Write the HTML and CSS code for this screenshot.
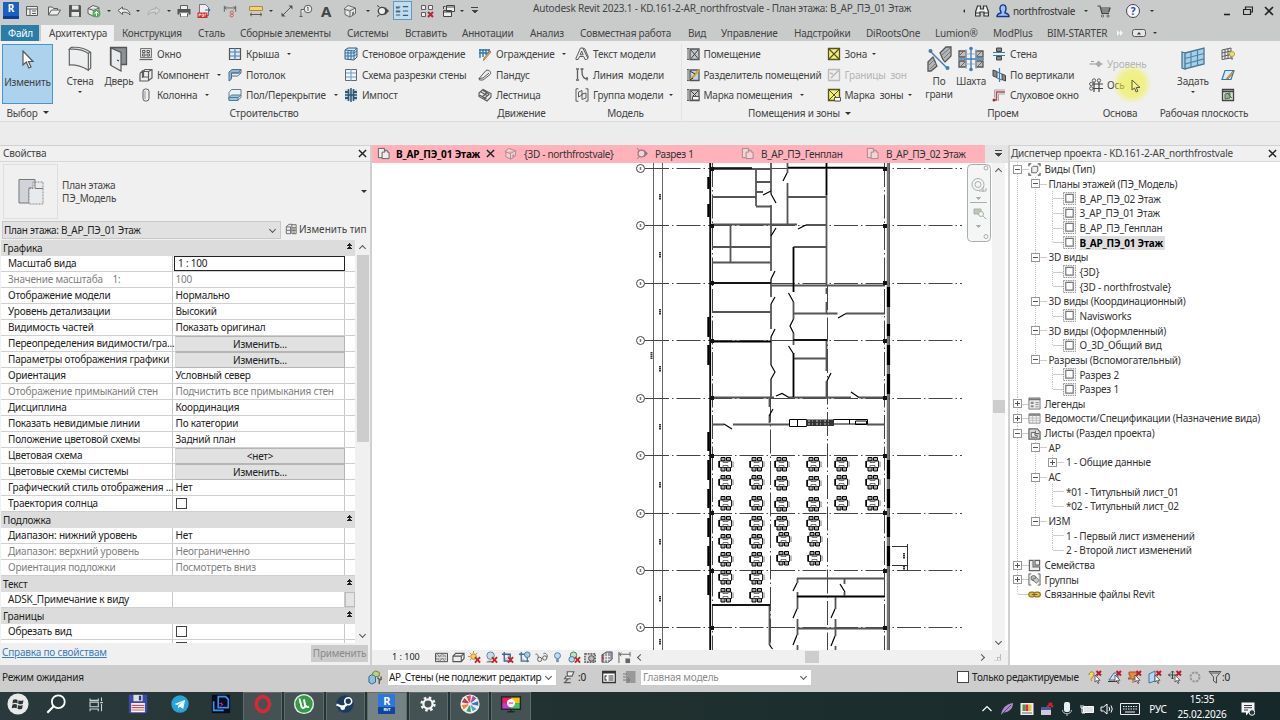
FILE: index.html
```html
<!DOCTYPE html>
<html lang="ru">
<head>
    <meta charset="UTF-8">
    <meta name="viewport" content="width=device-width, initial-scale=1.0">
    <title>Autodesk Revit 2023.1</title>
    <link rel="stylesheet" href="styles.css">
</head>
<body>
    <!-- Icon set -->
    <svg class="defs" width="0" height="0">
        <symbol id="i-window" viewBox="0 0 14 14"><path d="M1.500 2.500h11v9h-11zM1.500 5h11M5 5v6.500M7 7h4M7 9.500h4" class="s"/></symbol>
        <symbol id="i-open" viewBox="0 0 14 14"><path d="M1.500 11V3h4l1 1.500h4V6M1.500 11l3-5h9l-3 5z" class="s"/></symbol>
        <symbol id="i-save" viewBox="0 0 14 14"><path d="M1 1h11l1 1v11H1z" fill="#555"/><path d="M4 1.500h6.500v4H4zM3.500 8h7.500v4.500H3.500z" fill="#e6e8e8"/></symbol>
        <symbol id="i-sync" viewBox="0 0 14 14"><path d="M1 4.500L6 1.500l6 2v5l-5 4-6-3zM1 4.500l5.500 2L12 4M6.500 6.500V12" class="s"/><circle cx="9.500" cy="9.500" r="4" fill="#5fa765"/><path d="M7.500 10l2-2.500 2 2M9.500 8v4" stroke="#fff" fill="none"/></symbol>
        <symbol id="i-undo" viewBox="0 0 14 14"><path d="M1 6.500L5.500 3v2c4.500 0 7 1.500 7.500 6-2-2.500-4-3-7.500-2.700V10.500z" class="s"/></symbol>
        <symbol id="i-print" viewBox="0 0 14 14"><path d="M3.500 5V1.500h7V5M3.500 9.500v3h7v-3" class="s"/><path d="M.5 5h13v5.500h-2V8.500h-9v2h-2z" fill="#555"/><path d="M4 9.500h6v3H4z" fill="#fff"/></symbol>
        <symbol id="i-pdf" viewBox="0 0 14 14"><path d="M2.500.5h6l3 3v8h-9z" fill="#eee" stroke="#777"/><path d="M.5 8.500h10V14H.5z" fill="#d2292d"/><path d="M2 12.500v-2.500h1.500v1H2M5 10v2.500h1.500V10zM8 12.500V10h1.500" stroke="#fff" stroke-width=".7" fill="none"/><path d="M8 6h5M11 4l2.200 2L11 8" stroke="#2d6fae" fill="none"/></symbol>
        <symbol id="i-dim" viewBox="0 0 16 14"><path d="M1.500 1v7M14.500 1v7M1.500 3.500h13M4 1.500l-2 2 2 2M12 1.500l2 2-2 2" class="s"/><path d="M8 8.500c0-2 4-2 4 0s-4 2-4 4 4 1.500 4-.5-4-1.500-4-3.500" fill="none" stroke="#d05040"/></symbol>
        <symbol id="i-measure" viewBox="0 0 14 14"><path d="M.5 2.500h13v4H.5z" fill="#f3d27a" stroke="#b08a2c"/><path d="M1 10.500h12M3 8.700l-2 1.800 2 1.800M11 8.700l2 1.800-2 1.800" class="s"/></symbol>
        <symbol id="i-align" viewBox="0 0 14 14"><path d="M3 11L11 3" stroke="#555"/><path d="M1.500 12.500v-4l4 4zM12.500 1.500v4l-4-4z" fill="#555"/></symbol>
        <symbol id="i-tag" viewBox="0 0 14 14"><circle cx="9" cy="5" r="3.800" class="s"/><path d="M9 3v4M5.200 5.500H2V12M.5 12.500h3M8 3.700L9 3" class="s"/></symbol>
        <symbol id="i-house" viewBox="0 0 14 14"><path d="M1 5l4-3.500L12.500 4v5.500L7 13l-5-2.500V5M1 5l5.500 2L12.500 4M7 7v6" fill="#e8e8e8" stroke="#666"/><path d="M9 8.500l2-1.200v3L9 11.500z" fill="#777"/></symbol>
        <symbol id="i-section" viewBox="0 0 14 14"><path d="M4.500 3L2 1.500M4.500 11L2 12.500M10 3.500L13.500 7 10 10.500z" fill="#444" stroke="#444"/><circle cx="7" cy="7" r="3.700" fill="#eee" stroke="#444" stroke-width="1.300"/></symbol>
        <symbol id="i-thin" viewBox="0 0 16 14"><path d="M1 2.500h5M1 7h5M1 11.500h5M9 2h6M9 7h6M9 12h6" stroke="#2d5f8c" fill="none" stroke-width="1.200"/><path d="M1 3.500h4M1 8h5" stroke="#333"/></symbol>
        <symbol id="i-closeviews" viewBox="0 0 14 14"><path d="M1.500 1.500h4v4h-4zM8.500 1.500h4v4h-4zM1.500 8.500h4v4h-4z" class="s"/><path d="M8 8l5 5M13 8l-5 5" stroke="#c22036" stroke-width="2"/></symbol>
        <symbol id="i-switch" viewBox="0 0 14 14"><path d="M4.500 1.500h8v6h-8zM4.500 3h8M1.500 6.500h8v6h-8zM1.500 8h8M1.500 5V2.500h2" fill="#eee" stroke="#444"/></symbol>
        <symbol id="i-binoc" viewBox="0 0 14 14"><path d="M2.500 2h3v3h3V2h3l2 6v4h-4.500V8h-4v4H.5V8z" fill="#eee" stroke="#333" stroke-width="1.200"/><path d="M1 9h4M9 9h4" stroke="#333"/></symbol>
        <symbol id="i-user" viewBox="0 0 14 14"><path d="M4 4.500C4-.3 10-.3 10 4.500 10 8 8.500 7.500 9 9c3 .5 4 1.500 4 3.500H1C1 10.500 2 9.500 5 9c.5-1.500-1-1.500-1-4.500z" fill="#a3c0f1" stroke="#17358c" stroke-width="1.400"/></symbol>
        <symbol id="i-cart" viewBox="0 0 14 14"><path d="M.5 2h2.500l2 7.500h7M3.500 4H13l-1.200 4H4.700M4 6h8.500" fill="none" stroke="#444" stroke-width="1.200"/><circle cx="5.500" cy="12" r="1.100" class="s"/><circle cx="11" cy="12" r="1.100" class="s"/></symbol>
        <symbol id="i-cross" viewBox="0 0 10 10"><path d="M1 1l8 8M9 1L1 9" stroke="#222" stroke-width="1.600"/></symbol>

        <symbol id="i-wall" viewBox="0 0 26 28"><path d="M1.500 3.500C8 3 16 4 22 8l2-1.500C18 2 9 1 3.500 1.500zM1.500 3.500v17C9 20 15 22 22 26V8M22 26l2.500-2V6.500" fill="#eceef0" stroke="#666" stroke-width="1.300"/></symbol>
        <symbol id="i-door" viewBox="0 0 20 26"><path d="M1.500 1.500h16v17h-16z" fill="#8d9193" stroke="#555" stroke-width="1.300"/><path d="M2 2l10 4.500V25L2 19.500z" fill="#e9ecee" stroke="#555" stroke-width="1.200"/><path d="M8 14l2 1" stroke="#444" stroke-width="1.300"/></symbol>
        <symbol id="i-win" viewBox="0 0 14 14"><path d="M1.500 1.500h11v9h-11z" fill="#ddd" stroke="#777"/><path d="M3.500 3.500h2.500v2H3.500zM8 3.500h2.500v2H8zM3.500 7h2.500v2H3.500zM8 7h2.500v2H8z" class="s"/><path d="M.5 12.500h13" stroke="#666" stroke-width="1.300"/></symbol>
        <symbol id="i-comp" viewBox="0 0 14 14"><path d="M1 5.500L3.500 3v7M1 5.500V13h8l4-3V1.500H6L4.500 3v6h5V3.500L13 1.500M9.500 9v4M4.500 3.500h5" class="s" stroke-width="1.200"/></symbol>
        <symbol id="i-col" viewBox="0 0 14 14"><rect x="4" y="1" width="6" height="12" rx="2.500" class="s"/><path d="M6 3v8" stroke="#999"/></symbol>
        <symbol id="i-roof" viewBox="0 0 14 14"><path d="M1.500 1.500h11v11h-11z" fill="#dbe9f4" stroke="#555" stroke-width="1.200"/><path d="M7 1v12M2 5h10M2 9h10" stroke="#4d82ad" stroke-width="1.200"/></symbol>
        <symbol id="i-ceil" viewBox="0 0 14 14"><path d="M1 4l3-2.500h9L10.500 5H3.500v6L1 13z" fill="#8fb7d8" stroke="#4d6f8b"/><path d="M3.500 5H13V1.500M3.500 8h6L13 5" fill="none" stroke="#4d6f8b"/></symbol>
        <symbol id="i-floor" viewBox="0 0 14 14"><path d="M3.500 1.500H13v8L10 12H1V4.500z" fill="#eef1f2" stroke="#667c8c"/><path d="M1 9.500l2.500-2.500H13l-3 2.500V12.500H1zM1 9.500h9" fill="#9cc6e2" stroke="#4d7c9e"/></symbol>
        <symbol id="i-curtain" viewBox="0 0 14 14"><path d="M1 3l3-2h9v9l-3 3-9-1z" fill="#d5e7f4" stroke="#345a78"/><path d="M1 6h9l3-2M1 9h9l3-2M4 3v9.500M7 3v9.500M10 4v9M1 3l9 1 3-3" fill="none" stroke="#376f9b"/></symbol>
        <symbol id="i-grid" viewBox="0 0 14 14"><path d="M1.500 1.500h11v11h-11z" fill="#f0f5f9" stroke="#667"/><path d="M7 1v12M2 5h10M2 9h10" stroke="#6f9dbf"/></symbol>
        <symbol id="i-mull" viewBox="0 0 14 14"><path d="M1 1.500h12v11H1z" fill="#bfd5e5"/><path d="M1 3h3v2H1zM1 9h3v2H1zM10 3h3v2h-3zM10 9h3v2h-3z" fill="#2c5b80"/><path d="M7 0v14M1 7h12M4.500 1v12M9.500 1v12" stroke="#34546c" stroke-width="1.500"/></symbol>
        <symbol id="i-rail" viewBox="0 0 14 14"><path d="M1 3h11M1 6h10M2 2v9M5 2v8M8 2v6M11 2v4" stroke="#2e79b2" fill="none" stroke-width="1.400"/><path d="M13 5l-6 7-1.500 1.500.5-2.500L12 4z" fill="#edb85c" stroke="#8a6428" stroke-width=".7"/></symbol>
        <symbol id="i-ramp" viewBox="0 0 14 14"><path d="M1 10.500L8 2.500c4-1.500 6 3 3.500 4.500L5 12H1.500zM1 10.500l4-.5 6-5" class="s"/></symbol>
        <symbol id="i-stair" viewBox="0 0 14 14"><path d="M1 5l4-3.500 8 4V9l-4 4-8-4.500zM3 4l7 4M5 2.500l6.500 4M1.500 7l7 4M4 9l5-4.500M6 10.500l5-4" class="s" stroke-width="1.100"/></symbol>
        <symbol id="i-mtext" viewBox="0 0 14 14"><path d="M.7 12L5.500 1h2.300L13 11.500l-1.500 1H10L8.700 9.500H4.500L3.200 12.500H1zM6.700 4L5.200 7.800h2.900zM7.800 1L10 2l3.500 8.500" class="s"/></symbol>
        <symbol id="i-mline" viewBox="0 0 14 14"><path d="M2.500 2v9M1 1h3M1 12h3M7 1v3c0 4 2 7 6 7M5.500 1h3M12 9v3.500" fill="none" stroke="#5c5c5c" stroke-width="1.300"/></symbol>
        <symbol id="i-mgroup" viewBox="0 0 14 14"><path d="M3.500.8H1v12.400h2.500M10.500.8H13v12.400h-2.500" class="s"/><path d="M3.500 4L7 2.500V7L3.500 9zM7 6l4-1v5l-4 1.500z" class="s"/></symbol>
        <symbol id="i-room" viewBox="0 0 14 14"><path d="M1 1.500h2M1 12.500h2M2 1v12" class="s"/><path d="M4 2h9v10.500H4z" fill="#bfc8ce" stroke="#555" stroke-width="1.300"/><path d="M5 3l7 8.500M12 3l-7 8.500" stroke="#444"/></symbol>
        <symbol id="i-roomsep" viewBox="0 0 14 14"><path d="M1 1.500h2M1 12.500h2M2 1v12" class="s"/><path d="M4 2h9v10.500H4z" fill="#bcd3e6" stroke="#555" stroke-width="1.300"/><path d="M13 2L6.500 9.500 5 11.500" stroke="#d5a13b" stroke-width="2"/><path d="M4 3l5 3M4 12l3-2" stroke="#333"/></symbol>
        <symbol id="i-roomtag" viewBox="0 0 14 14"><path d="M1 1.500h2M1 12.500h2M2 1v12" class="s"/><path d="M4 2h9v10.500H4z" fill="#c5c9cb" stroke="#555" stroke-width="1.300"/><path d="M5 3l7 7M12 3L7 8" stroke="#444"/><path d="M6.500 8.500h6.500v3.500H6.500z" fill="#fff" stroke="#555"/></symbol>
        <symbol id="i-area" viewBox="0 0 14 14"><path d="M1.500 1.500h11v11h-11z" fill="#f3ef7b" stroke="#55531c" stroke-width="1.300"/><path d="M2 2l10 10M12 2L2 12" stroke="#55531c" stroke-width="1.200"/></symbol>
        <symbol id="i-areasep" viewBox="0 0 14 14"><path d="M1.500 1.500h11v11h-11z" fill="#eee" stroke="#bbb" stroke-width="1.300"/><path d="M12 2L4 10M3 5l3 1" stroke="#bbb" stroke-width="1.500"/></symbol>
        <symbol id="i-areatag" viewBox="0 0 14 14"><path d="M1.500 1.500h11v11h-11z" fill="#f3ef7b" stroke="#55531c" stroke-width="1.300"/><path d="M2 2l8 8M12 2L2 12" stroke="#55531c"/><path d="M7.500 9.500h6V13h-6z" fill="#fff" stroke="#555"/></symbol>
        <symbol id="i-face" viewBox="0 0 26 26"><path d="M14 7l6-6h5v9l-6 6c-3-2-3-6-5-9zM2 16l5-5c2 3 2 6 4 9l-6 5H2z" fill="#b3b5b6" stroke="#555" stroke-width="1.300"/><path d="M16 9l8-7M18 12l7-7M3 19l6-6M4 23l6-6" stroke="#777"/><path d="M4 5l17 17" stroke="#3d7db5" stroke-width="1.400"/><circle cx="4.500" cy="5" r="2" fill="#3d7db5"/><circle cx="21.500" cy="22" r="2" fill="#3d7db5"/></symbol>
        <symbol id="i-shaft" viewBox="0 0 26 26"><path d="M1 5h7v6H1zM1 15h7v6H1zM18 5h7v6h-7zM18 15h7v6h-7z" fill="#bdbfc0" stroke="#555" stroke-width="1.300"/><path d="M2 9l3-3M3 20l4-4M19 10l4-4M20 20l4-4" stroke="#666"/><path d="M8 3v20M18 3v20M8 8h10M8 18h10" stroke="#96b6cf"/><path d="M13 2v22M0 13h26" stroke="#3d7db5" stroke-width="1.300"/><circle cx="13" cy="2.500" r="1.800" fill="#3d7db5"/><circle cx="13" cy="23.500" r="1.800" fill="#3d7db5"/></symbol>
        <symbol id="i-owall" viewBox="0 0 14 14"><path d="M4.500 1h5v3.500h-5zM4.500 9.500h5V13h-5z" fill="#888" stroke="#444"/><path d="M1 5.500h12M1 8.500h12" stroke="#3d7db5" stroke-width="1.200"/></symbol>
        <symbol id="i-overt" viewBox="0 0 14 14"><path d="M1 2l4 1.500v6L1 8z" fill="#888" stroke="#444"/><path d="M10 6l3.500 1.500V13L10 11.500z" fill="#888" stroke="#444"/><path d="M7.500 0v14M5 4l5 2M5 10l5 2" stroke="#3d7db5" stroke-width="1.200"/></symbol>
        <symbol id="i-dormer" viewBox="0 0 14 14"><path d="M1.500 12h3V4H13" fill="none" stroke="#b04a56" stroke-width="1.500"/><path d="M6.500 13V6H13M2.500 9.500V2H13" fill="none" stroke="#777" stroke-width=".6"/><circle cx="2" cy="12" r="1.500" fill="#a03040"/></symbol>
        <symbol id="i-level" viewBox="0 0 14 14"><path d="M.5 7H8M11 7h2.500M2 4.500h3" stroke="#999"/><path d="M9.500 3.500L13 7l-3.500 3.500L6.500 7z" fill="#aaa"/></symbol>
        <symbol id="i-axis" viewBox="0 0 14 14"><path d="M5 4v10M10 4v10M4 6h10M4 10.500h10" stroke="#444" stroke-width="1.200"/><circle cx="5" cy="2.500" r="1.700" class="s"/><circle cx="10" cy="2.500" r="1.700" class="s"/><circle cx="2.300" cy="6" r="1.700" class="s"/><circle cx="2.300" cy="10.500" r="1.700" class="s"/></symbol>
        <symbol id="i-plane" viewBox="0 0 24 26"><path d="M1 6l3 1v16l-3-1zM4 7l19-5v16L4 23z" fill="#a5d0e6" stroke="#4a7693" stroke-width="1.300"/><path d="M10 5.500v16M16.500 4v16M4 12.500L23 7.500M4 18l19-5.200" stroke="#4a86ab" stroke-width="1.200"/></symbol>
        <symbol id="i-showp" viewBox="0 0 14 14"><path d="M1 3l9-2v10l-9 1.500zM1 6l9-2M1 9.500l9-2M4 2.500V12M7 1.500V12" class="s"/><circle cx="11" cy="7" r="2.600" fill="#f1dc72" stroke="#a08b34" stroke-width=".7"/><path d="M10 10.500h2v2h-2z" fill="#777"/></symbol>
        <symbol id="i-refp" viewBox="0 0 14 14"><path d="M4 2.500h9l-3 9H1z" fill="#d7eaf5" stroke="#3479aa" stroke-width="1.200"/><path d="M13 4l-6 7-1.500.5.5-1.500 6-7z" fill="#e9b65b" stroke="#7c5c2b" stroke-width=".7"/></symbol>
        <symbol id="i-viewer" viewBox="0 0 14 14"><path d="M1.500 1.500h11v11h-11zM1.500 3.500h11" fill="#ddd" stroke="#444" stroke-width="1.300"/><path d="M4 6l5-1v5l-5 1zM7 6l4 4" fill="#8fb98d" stroke="#4c6c4b"/></symbol>

        <symbol id="i-plan" viewBox="0 0 14 14"><path d="M5.500 11.500h-4v-10H8v3" class="s"/><path d="M5.500 5.500h3v-2h2.500v2h2v7h-7.500z" class="s"/></symbol>
        <symbol id="i-typeplan" viewBox="0 0 28 28"><path d="M2 1.500h16V10h-6v15H2z" fill="#d0d4d8" stroke="#777"/><path d="M12 10.500h4V4h10v22H12z" fill="#e8ebee" stroke="#888" stroke-dasharray="2 1"/><path d="M18 4v6.500h8" fill="none" stroke="#777"/></symbol>
        <symbol id="i-edittype" viewBox="0 0 14 14"><path d="M1.500 4.500l3-3H8v4M1.500 4.500v8h5v-8zM1.500 8.500h5M8 5.500h5v7H8zM8 8.500h5M10.500 5.500v7M8 2h5v3.500" class="s"/></symbol>
        <symbol id="i-view" viewBox="0 0 14 14"><path d="M.5.5h13v13H.5z" fill="#f5f5f5" stroke="#888" stroke-dasharray="1.500 1"/><path d="M3 2.500h8v8.500H3z" fill="#fff" stroke="#777" stroke-width="1.300"/></symbol>
        <symbol id="i-views" viewBox="0 0 14 14"><path d="M3.500 1H1v2.500M10.500 1H13v2.500M1 10.500V13h2.500M10.500 13H13v-2.500" class="s" stroke-width="1.300"/><path d="M4 5l1.500-1.500h5v5L9 10.500H4z" class="s"/></symbol>
        <symbol id="i-legend" viewBox="0 0 14 14"><path d="M1 1h12v12H1z" fill="#eee" stroke="#777"/><path d="M1 2.500h12" stroke="#777" stroke-width="2"/><path d="M3 5h3v2.500H3zM3 9h3v2H3z" fill="#888"/><path d="M8 6h3.500M8 8h3.500M8 10.500h3.500" stroke="#888"/></symbol>
        <symbol id="i-sched" viewBox="0 0 14 14"><path d="M1 2h12v10H1z" fill="#f4f4f4" stroke="#888"/><path d="M1 3h12" stroke="#888" stroke-width="2.500"/><path d="M1 6.500h12M1 9h12M5 4v8M9 4v8" stroke="#bbb"/></symbol>
        <symbol id="i-sheets" viewBox="0 0 14 14"><path d="M1 2h9l3 3v8H1z" fill="#d5d7dc" stroke="#666" stroke-width="1.300"/><path d="M3.500 11V6h4v3H10v2zM8 4v3h4" class="s"/></symbol>
        <symbol id="i-family" viewBox="0 0 14 14"><path d="M1.500 1.500h4v7h7v4h-11z" fill="#eee" stroke="#666" stroke-width="1.300"/><path d="M7.500 1.500h5v5h-5z" class="s" stroke-width="1.300"/></symbol>
        <symbol id="i-groups" viewBox="0 0 14 14"><path d="M3.500 1H1v12h2.500M10.500 1H13v12h-2.500" class="s"/><circle cx="6" cy="5.500" r="2.800" fill="#bbb" stroke="#666"/><path d="M5 7l4-2 3 3-3 3z" fill="#ccc" stroke="#666"/></symbol>
        <symbol id="i-link" viewBox="0 0 14 14"><rect x=".7" y="4.500" width="7" height="5" rx="2.500" fill="#e3bd45" stroke="#957216" stroke-width="1.200"/><rect x="6.300" y="4.500" width="7" height="5" rx="2.500" fill="#e3bd45" stroke="#957216" stroke-width="1.200"/><path d="M4 7h6" stroke="#755b18"/></symbol>

        <symbol id="i-detail" viewBox="0 0 14 14"><path d="M.5 2.500h13v9H.5z" fill="#ddd" stroke="#444"/><path d="M1 5.500h12M1 8.500h12" stroke="#555" stroke-dasharray="1 1"/><path d="M2 3l3 3 3-3 3 3M2 8l3 3 3-3 3 3" stroke="#666" fill="none" stroke-width=".7"/></symbol>
        <symbol id="i-box" viewBox="0 0 14 14"><path d="M1 5.500L4 2.500h9V8l-3 3.500H1zM1 5.500h9v6M10 5.500l3-3" fill="#eee" stroke="#555" stroke-width="1.200"/></symbol>
        <symbol id="i-sunx" viewBox="0 0 14 14"><circle cx="6" cy="6" r="3" fill="#f7d15d" stroke="#b7812c"/><path d="M6 0v2M0 6h2M2 2l1.300 1.300M10 2L8.700 3.300M2 10l1.300-1.300" stroke="#b7812c"/><use href="#x-red"/></symbol>
        <symbol id="i-shadowx" viewBox="0 0 14 14"><circle cx="6" cy="5" r="4" fill="#c6dce8" stroke="#5c8499"/><path d="M1 12.500c2-3 6-3 9 0" fill="#888"/><use href="#x-red"/></symbol>
        <symbol id="i-cropx" viewBox="0 0 14 14"><path d="M3.500 1v10H12M1 3.500h9V12" fill="#a9cae0" stroke="#3c6787" stroke-width="1.400"/><use href="#x-red"/></symbol>
        <symbol id="i-crop" viewBox="0 0 14 14"><path d="M3.500 1v10H12M1 3.500h9V12" fill="#c8d5dd" stroke="#4c718b" stroke-width="1.400"/><circle cx="10" cy="4" r="3" fill="#a7cbe6" stroke="#447498"/></symbol>
        <symbol id="i-glasses" viewBox="0 0 14 14"><path d="M.5 3.500c2-1 3 1 3 4M9 3c3-2 5 2 4 4" fill="none" stroke="#5c5c5c"/><circle cx="5" cy="9" r="2.300" class="s"/><circle cx="10.500" cy="7.500" r="2.300" class="s"/></symbol>
        <symbol id="i-bulb" viewBox="0 0 14 14"><circle cx="7" cy="5" r="3.200" fill="#c5dcf0" stroke="#4379ab"/><path d="M5.500 8.500h3v3.500h-3z" fill="#7994aa"/></symbol>
        <symbol id="i-worksx" viewBox="0 0 14 14"><circle cx="6" cy="4.500" r="3.500" fill="#bfdcc4" stroke="#427f51"/><circle cx="4" cy="9" r="3" fill="#bcd8ea" stroke="#3a6f91"/><use href="#x-red"/></symbol>
        <symbol id="i-temp" viewBox="0 0 14 14"><path d="M1 3h11v9H1z" fill="#ddd" stroke="#333" stroke-width="1.300" stroke-dasharray="2 1"/><circle cx="8" cy="8" r="3" fill="#bbb" stroke="#444"/></symbol>
        <symbol id="i-analyt" viewBox="0 0 14 14"><path d="M1 12V4l5-3h6v8l-4 3z" fill="#9a9da5" stroke="#505560"/><path d="M1 6h9M1 9h9M4 3v9M7 2v10" stroke="#eee"/><path d="M2 4v6" stroke="#a83440" stroke-width="1.600"/></symbol>
        <symbol id="i-constr" viewBox="0 0 14 14"><path d="M1 1v12M13 1v5M1 3.500h12M3.500 1.500l-2 2 2 2" class="s"/><path d="M8 8h5v5H8z" fill="#666"/></symbol>
        <symbol id="x-red" viewBox="0 0 14 14"><path d="M7.500 6.500l5.500 6M13 6.500l-5.500 6" stroke="#c3262c" stroke-width="2"/></symbol>

        <symbol id="i-ws" viewBox="0 0 16 16"><path d="M1 7l3-2 4 1.500V13l-4 2-3-2z" fill="#8fc0e4" stroke="#2f6388"/><path d="M5 3l3-2 4 1.500v4L8 7 5 5z" fill="#b9d67c" stroke="#64813b"/><path d="M10 8l2 2v5M14 7v3l-2 1" stroke="#555" stroke-width="1.500" fill="none"/></symbol>
        <symbol id="i-req" viewBox="0 0 14 16"><path d="M5 2h7.500l-2 5H5zM4 7l-2 3h7M6 10l-4 4.500M1 14.500h8" class="s" stroke-width="1.300"/></symbol>
        <symbol id="i-opt" viewBox="0 0 14 14"><path d="M.7 1.500h12.600v11H.7z" fill="#fff" stroke="#333" stroke-width="1.300"/><path d="M.7 2.500h12.600" stroke="#333" stroke-width="2"/><path d="M3 5.500v5M3 6h2M3 10h2M6.500 6h5M6.500 8h5M6.500 10h5" stroke="#333"/></symbol>
        <symbol id="i-optx" viewBox="0 0 14 14"><path d="M4 1h9.500v12H4z" fill="#999"/><path d="M1 10h6M5 7l3 3-3 3M1 4h4M1 7h3" stroke="#777" fill="none"/></symbol>
        <symbol id="i-sel1" viewBox="0 0 14 14"><path d="M1 5c0-4 5-4 5-1s-5 5-2 7" fill="#f2d766" stroke="#ab8422"/><use href="#sel"/></symbol>
        <symbol id="i-sel2" viewBox="0 0 14 14"><path d="M1 10l5-7h4v7z" fill="#cfe2f0" stroke="#3e6e91"/><path d="M0 11.500h9" stroke="#333"/><use href="#sel"/></symbol>
        <symbol id="i-sel3" viewBox="0 0 14 14"><path d="M1 2h8v3H8v3h2v1H0V8h2V5H1zM5 9v4" fill="#e98a3b" stroke="#a4551d"/><use href="#sel"/></symbol>
        <symbol id="i-sel4" viewBox="0 0 14 14"><path d="M1 4l6-3v10l-6 2z" fill="#b6d8ee" stroke="#3e779f"/><use href="#sel"/></symbol>
        <symbol id="i-sel5" viewBox="0 0 14 14"><path d="M4.500 1v8M.5 5h8M3 2.500L4.500 1 6 2.500M3 7.500L4.500 9 6 7.500M2 3.500L.5 5 2 6.500" fill="none" stroke="#444"/><use href="#sel"/></symbol>
        <symbol id="sel" viewBox="0 0 14 14"><path d="M8.500 1l4.500 4.500M13 1L8.500 5.500" stroke="#c3162c" stroke-width="2"/><path d="M7 5v7l1.600-1.400L10 13.500l1-.6-1.300-2.600H12z" fill="#fff" stroke="#444" stroke-width=".8"/></symbol>
        <symbol id="i-filter" viewBox="0 0 14 14"><path d="M1 1.500h12L8.500 7v6L5.500 11V7zM2.500 3h9" fill="#ccc" stroke="#555"/></symbol>

        <!-- dining table with four chairs -->
        <symbol id="seat" viewBox="0 0 16 16"><path d="M3 1.500h4v3H3zM8.500 1.500h4v3h-4zM3 11.500h4V15H3zM8.500 11.500h4V15h-4z" fill="#aaa" stroke="#000"/><path d="M1.500 5h12v6.500h-12z" fill="#fff" stroke="#222"/><path d="M1 5v6.500" stroke="#000" stroke-width="1.500"/><path d="M15 5.500v5.500M5 4v2.500h5V4M5 12V9.500h5V12" fill="none" stroke="#555" stroke-width=".8"/></symbol>
    </svg>

    <header class="titlebar">
        <div class="qat">
            <span class="rlogo">R</span>
            <svg><use href="#i-window"/></svg>
            <svg><use href="#i-open"/></svg>
            <svg><use href="#i-save"/></svg>
            <svg><use href="#i-sync"/></svg>
            <i class="dd"></i>
            <svg><use href="#i-undo"/></svg>
            <i class="dd"></i>
            <svg class="dim flip"><use href="#i-undo"/></svg>
            <i class="dd"></i>
            <svg><use href="#i-print"/></svg>
            <svg><use href="#i-pdf"/></svg>
            <svg><use href="#i-dim"/></svg>
            <svg><use href="#i-measure"/></svg>
            <i class="dd"></i>
            <svg><use href="#i-align"/></svg>
            <svg><use href="#i-tag"/></svg>
            <b class="letter-a">A</b>
            <svg><use href="#i-house"/></svg>
            <i class="dd"></i>
            <svg><use href="#i-section"/></svg>
            <span class="qat-on"><svg><use href="#i-thin"/></svg></span>
            <svg><use href="#i-closeviews"/></svg>
            <svg><use href="#i-switch"/></svg>
            <i class="dd"></i>
            <i class="dd bar"></i>
        </div>
        <div class="caption">Autodesk Revit 2023.1 - KD.161-2-AR_northfrostvale - План этажа: В_АР_ПЭ_01 Этаж</div>
        <div class="account">
            <i class="back"></i>
            <svg><use href="#i-binoc"/></svg>
            <svg><use href="#i-user"/></svg>
            <span class="username">northfrostvale</span>
            <i class="dd"></i>
            <svg><use href="#i-cart"/></svg>
            <span class="help">?</span>
            <i class="dd"></i>
        </div>
        <div class="winbtns">
            <svg viewBox="0 0 10 10"><path d="M2 8.500h6" stroke="#222" stroke-width="1.600"/></svg>
            <svg viewBox="0 0 10 10"><path d="M2.500 3V1h7v5H8M.5 3.500h7v5h-7z" fill="none" stroke="#222" stroke-width="1.200"/></svg>
            <svg><use href="#i-cross"/></svg>
        </div>
    </header>

    <nav class="tabs">
        <span class="tab file">Файл</span>
        <span class="tab active">Архитектура</span>
        <span class="tab">Конструкция</span>
        <span class="tab">Сталь</span>
        <span class="tab">Сборные элементы</span>
        <span class="tab">Системы</span>
        <span class="tab">Вставить</span>
        <span class="tab">Аннотации</span>
        <span class="tab">Анализ</span>
        <span class="tab">Совместная работа</span>
        <span class="tab">Вид</span>
        <span class="tab">Управление</span>
        <span class="tab">Надстройки</span>
        <span class="tab">DiRootsOne</span>
        <span class="tab">Lumion®</span>
        <span class="tab">ModPlus</span>
        <span class="tab">BIM-STARTER</span>
        <svg class="more" viewBox="0 0 8 8"><path d="M0 0l4 4-4 4zM4 0l4 4-4 4z" fill="#f4f4f4"/></svg>
        <svg class="minim" viewBox="0 0 14 8"><rect x=".5" y=".5" width="13" height="7" rx="2" fill="#e6e6e6" stroke="#555"/><path d="M5 5.500L7 3l2 2.500z" fill="#333"/></svg>
        <i class="dd"></i>
    </nav>

    <section class="ribbon">
        <div class="panel p-select">
            <div class="body">
                <div class="big pressed">
                    <svg viewBox="0 0 14 20"><path d="M2 1v14l3.300-3 2.500 6 2.200-1-2.500-5.500H12z" fill="#fff" stroke="#555" stroke-width="1.200"/></svg>
                    <span>Изменить</span>
                </div>
            </div>
            <div class="label">Выбор <i class="dd lg"></i></div>
        </div>
        <div class="panel p-build">
            <div class="body">
                <div class="big"><svg><use href="#i-wall"/></svg><span>Стена</span><i class="dd"></i></div>
                <div class="big"><svg><use href="#i-door"/></svg><span>Дверь</span></div>
                <div class="col">
                    <div class="cmd"><svg><use href="#i-win"/></svg><span>Окно</span></div>
                    <div class="cmd"><svg><use href="#i-comp"/></svg><span>Компонент</span><i class="dd"></i></div>
                    <div class="cmd"><svg><use href="#i-col"/></svg><span>Колонна</span><i class="dd"></i></div>
                </div>
                <div class="col">
                    <div class="cmd"><svg><use href="#i-roof"/></svg><span>Крыша</span><i class="dd"></i></div>
                    <div class="cmd"><svg><use href="#i-ceil"/></svg><span>Потолок</span></div>
                    <div class="cmd"><svg><use href="#i-floor"/></svg><span>Пол/Перекрытие</span><i class="dd"></i></div>
                </div>
                <div class="col">
                    <div class="cmd"><svg><use href="#i-curtain"/></svg><span>Стеновое ограждение</span></div>
                    <div class="cmd"><svg><use href="#i-grid"/></svg><span>Схема разрезки стены</span></div>
                    <div class="cmd"><svg><use href="#i-mull"/></svg><span>Импост</span></div>
                </div>
            </div>
            <div class="label">Строительство</div>
        </div>
        <div class="panel p-circ">
            <div class="body">
                <div class="col">
                    <div class="cmd"><svg><use href="#i-rail"/></svg><span>Ограждение</span><i class="dd"></i></div>
                    <div class="cmd"><svg><use href="#i-ramp"/></svg><span>Пандус</span></div>
                    <div class="cmd"><svg><use href="#i-stair"/></svg><span>Лестница</span></div>
                </div>
            </div>
            <div class="label">Движение</div>
        </div>
        <div class="panel p-model">
            <div class="body">
                <div class="col">
                    <div class="cmd"><svg><use href="#i-mtext"/></svg><span>Текст модели</span></div>
                    <div class="cmd"><svg><use href="#i-mline"/></svg><span>Линия&nbsp; модели</span></div>
                    <div class="cmd"><svg><use href="#i-mgroup"/></svg><span>Группа модели</span><i class="dd near"></i></div>
                </div>
            </div>
            <div class="label">Модель</div>
        </div>
        <div class="panel p-room">
            <div class="body">
                <div class="col">
                    <div class="cmd"><svg><use href="#i-room"/></svg><span>Помещение</span></div>
                    <div class="cmd"><svg><use href="#i-roomsep"/></svg><span>Разделитель помещений</span></div>
                    <div class="cmd"><svg><use href="#i-roomtag"/></svg><span>Марка помещения</span><i class="dd"></i></div>
                </div>
                <div class="col">
                    <div class="cmd"><svg><use href="#i-area"/></svg><span>Зона</span><i class="dd near"></i></div>
                    <div class="cmd off"><svg><use href="#i-areasep"/></svg><span>Границы&nbsp; зон</span></div>
                    <div class="cmd"><svg><use href="#i-areatag"/></svg><span>Марка&nbsp; зоны</span><i class="dd near"></i></div>
                </div>
            </div>
            <div class="label">Помещения и зоны <i class="dd lg"></i></div>
        </div>
        <div class="panel p-open">
            <div class="body">
                <div class="big"><svg><use href="#i-face"/></svg><span>По<br>грани</span></div>
                <div class="big"><svg><use href="#i-shaft"/></svg><span>Шахта</span></div>
                <div class="col">
                    <div class="cmd"><svg><use href="#i-owall"/></svg><span>Стена</span></div>
                    <div class="cmd"><svg><use href="#i-overt"/></svg><span>По вертикали</span></div>
                    <div class="cmd"><svg><use href="#i-dormer"/></svg><span>Слуховое окно</span></div>
                </div>
            </div>
            <div class="label">Проем</div>
        </div>
        <div class="panel p-datum">
            <div class="body">
                <div class="col two">
                    <div class="cmd off"><svg><use href="#i-level"/></svg><span>Уровень</span></div>
                    <div class="cmd"><svg><use href="#i-axis"/></svg><span>Ось</span></div>
                </div>
            </div>
            <div class="label">Основа</div>
            <div class="pointer">
                <svg viewBox="0 0 10 14"><path d="M1 1v10l2.500-2 1.700 4 1.700-.8-1.700-3.700H9z" fill="#f6f68a" stroke="#555"/></svg>
            </div>
        </div>
        <div class="panel p-wp">
            <div class="body">
                <div class="big"><svg><use href="#i-plane"/></svg><span>Задать</span><i class="dd"></i></div>
                <div class="col">
                    <div class="cmd"><svg><use href="#i-showp"/></svg></div>
                    <div class="cmd"><svg><use href="#i-refp"/></svg></div>
                    <div class="cmd"><svg><use href="#i-viewer"/></svg></div>
                </div>
            </div>
            <div class="label">Рабочая плоскость</div>
        </div>
    </section>
    <div class="options-bar"></div>

    <main class="workspace">
        <!-- Properties palette -->
        <aside class="props">
            <div class="pal-title"><span>Свойства</span><svg class="x"><use href="#i-cross"/></svg></div>
            <div class="type">
                <div class="type-pic"><svg><use href="#i-typeplan"/></svg></div>
                <div class="type-name">План этажа<br>ПЭ_Модель</div>
                <i class="dd lg"></i>
            </div>
            <div class="instance">
                <div class="combo"><span>План этажа: В_АР_ПЭ_01 Этаж</span><i class="chev"></i></div>
                <div class="edit-type"><svg><use href="#i-edittype"/></svg><span>Изменить тип</span></div>
            </div>
            <div class="grid-wrap">
                <div class="pgrid">
                    <div class="cat">Графика<i></i></div>
                    <div class="row"><span>Масштаб вида</span><b class="edit">1 : 100</b></div>
                    <div class="row ro"><span>Значение масштаба&nbsp;&nbsp;&nbsp; 1:</span><b>100</b></div>
                    <div class="row"><span>Отображение модели</span><b>Нормально</b></div>
                    <div class="row"><span>Уровень детализации</span><b>Высокий</b></div>
                    <div class="row"><span>Видимость частей</span><b>Показать оригинал</b></div>
                    <div class="row"><span>Переопределения видимости/гра...</span><b class="btn">Изменить...</b></div>
                    <div class="row"><span>Параметры отображения графики</span><b class="btn">Изменить...</b></div>
                    <div class="row"><span>Ориентация</span><b>Условный север</b></div>
                    <div class="row ro"><span>Отображение примыканий стен</span><b>Подчистить все примыкания стен</b></div>
                    <div class="row"><span>Дисциплина</span><b>Координация</b></div>
                    <div class="row"><span>Показать невидимые линии</span><b>По категории</b></div>
                    <div class="row"><span>Положение цветовой схемы</span><b>Задний план</b></div>
                    <div class="row"><span>Цветовая схема</span><b class="btn">&lt;нет&gt;</b></div>
                    <div class="row"><span>Цветовые схемы системы</span><b class="btn">Изменить...</b></div>
                    <div class="row"><span>Графический стиль отображения ...</span><b>Нет</b></div>
                    <div class="row"><span>Траектория солнца</span><b><i class="check"></i></b></div>
                    <div class="cat">Подложка<i></i></div>
                    <div class="row"><span>Диапазон: нижний уровень</span><b>Нет</b></div>
                    <div class="row ro"><span>Диапазон: верхний уровень</span><b>Неограниченно</b></div>
                    <div class="row ro"><span>Ориентация подложки</span><b>Посмотреть вниз</b></div>
                    <div class="cat">Текст<i></i></div>
                    <div class="row mini"><span>ADSK_Примечание к виду</span><b></b></div>
                    <div class="cat">Границы<i></i></div>
                    <div class="row"><span>Обрезать вид</span><b><i class="check"></i></b></div>
                    <div class="row"><span></span><b><i class="check"></i></b></div>
                </div>
                <div class="vscroll"><i class="up"></i><div class="thumb"></div><i class="down"></i></div>
            </div>
            <div class="props-foot"><a>Справка по свойствам</a><span class="apply">Применить</span></div>
        </aside>

        <!-- Drawing area -->
        <section class="view">
            <div class="view-tabs">
                <div class="vt on"><svg><use href="#i-plan"/></svg><span>В_АР_ПЭ_01 Этаж</span><svg class="x"><use href="#i-cross"/></svg></div>
                <div class="vt"><svg><use href="#i-house"/></svg><span>{3D - northfrostvale}</span></div>
                <div class="vt"><svg><use href="#i-section"/></svg><span>Разрез 1</span></div>
                <div class="vt"><svg><use href="#i-plan"/></svg><span>В_АР_ПЭ_Генплан</span></div>
                <div class="vt"><svg><use href="#i-plan"/></svg><span>В_АР_ПЭ_02 Этаж</span></div>
                <div class="vt-list"><i class="dd lg bar"></i></div>
            </div>
            <div class="canvas-wrap">
                <svg class="canvas" viewBox="372 163 620 487">
                    <!-- dimension strings -->
                    <path d="M653.500 163v487M662.500 163v487" stroke="#666"/>
                    <path d="M660 194v6M660 252v6M660 309v6M660 366v6M660 424v6M660 482v6M660 539v6M660 596v6M660 639v6M651.500 352v7" stroke="#333" stroke-width="2" stroke-dasharray="1.500 .5"/>
                    <!-- grid lines -->
                    <g class="axis">
                        <path d="M645 168.500h317M645 225.500h317M645 283.500h317M645 340.500h317M645 398.500h317M645 455.500h317M645 513.500h317M645 570.500h317M645 627.500h317"/>
                    </g>
                    <path class="axis" d="M712.500 163v487M770.500 398v252M827.500 286v364M884.500 163v487"/>
                    <g class="bubble">
                        <circle cx="640.500" cy="168.500" r="4"/><circle cx="640.500" cy="225.500" r="4"/><circle cx="640.500" cy="283.500" r="4"/>
                        <circle cx="640.500" cy="340.500" r="4"/><circle cx="640.500" cy="398.500" r="4"/><circle cx="640.500" cy="455.500" r="4"/>
                        <circle cx="640.500" cy="513.500" r="4"/><circle cx="640.500" cy="570.500" r="4"/><circle cx="640.500" cy="627.500" r="4"/>
                    </g>
                    <path d="M640.500 167v3M640.500 224v3M640.500 282v3M640.500 339v3M640.500 397v3M640.500 454v3M640.500 512v3M640.500 569v3M640.500 626v3" stroke="#777" stroke-width="1.500"/>
                    <!-- outer walls -->
                    <path d="M710.200 163v487" stroke="#000" stroke-width="1.800"/>
                    <path d="M888 163v487" stroke="#777" stroke-width="2.400"/>
                    <path d="M889.500 163v487" stroke="#222" stroke-width=".7"/>
                    <path d="M708.500 177v12M708.500 204v13M708.500 317v20M708.500 345v20M708.500 432v19M708.500 460v20M708.500 489v19M708.500 518v19M708.500 546v20M708.500 575v20" stroke="#000" stroke-width="2.400"/>
                    <path d="M888.500 287v20M888.500 324v12M888.500 345v20M888.500 374v20M888.500 460v19M888.500 489v19M888.500 517v20M888.500 546v20" stroke="#000" stroke-width="3.200"/>
                    <!-- partitions -->
                    <g class="wall">
                        <path d="M712 169h59M712 197h44M756 168v38M756 182h15M756 192h7M756 206.500h15M712 224.500h85M730.500 225v37M712 247h59M712 262.500h59M712 283h59M771 285.500h114M712 312h59M712 341.500h59M712 397.500h62M789 397.500h62M859 397.500h26"/>
                        <path d="M771 163v31M771 205v66M771 279v18M771 304v25M771 337v28M771 379v19"/>
                        <path d="M787.500 163v10M787.500 183v42M788 168h97M788 197h38M806 225h20M826.500 163v123M826.500 288v6M826.500 302v11M793.500 247h33M793.500 247v45M793.500 302v17M793.500 333v12M793.500 313.500h44M846 313.500h39M793 340h34M826.500 340v31M826.500 381v16M793.500 358.500h33M793.500 353v44"/>
                        <path d="M769.500 398v9M769.500 416v7M712 424.500h12M733 424.500h56M867 424.500h18M712 605h58M769.500 605v40"/>
                        <path d="M797 578.500h88M797.500 578v5M797.500 592v17M797.500 619v16M797.500 645v5M844.500 578v6M844.500 592v4M797 596.500h88M835.500 596v13M835.500 619v17M797 628.500h88M835.500 646v4"/>
                    </g>
                    <path d="M712 283h59M712 341.500h59M788 167.500h97M793.500 247v45M793.500 353v44M797 596.500h88M712 605h58M793 340h34M826.500 163v32M712 168h40" stroke="#000" stroke-width="1.400"/>
                    <!-- door leaves -->
                    <path d="M771 194l5 9M776 228l-5 8M775 271l-4 8M775 297l-4 7M775 329l-4 8M771 365l4 7-4 7M787 173l-4 8M763 195l8-4M798 229l8-4M788.500 293l5 9M793.500 319l-3.500 7 3.500 7M838 318l8-4.500M788.500 346l4.500 7M831 373l-4 8M776 396l6-2.500 7 4M851 392l8 5.500M773 409l-4 7M724 424l8 5M797 583l-4 8M797 609l-4 9M797 635l-4 10M840 584l5 8M835 609l-4 9M835 636l-4 10M769.500 645l3 4" fill="none" stroke="#000" stroke-width="1.200"/>
                    <!-- columns -->
                    <path class="post" d="M712 167v4M712 224v4M712 281v4M712 339v4M712 396v4M712 454v4M712 511v4M712 569v4M712 626v4M885 167v4M885 224v4M885 281v4M885 339v4M885 396v4M885 454v4M885 511v4M885 569v4M885 626v4"/>
                    <!-- serving line -->
                    <path d="M789.500 419.500h17v7h-17zM797.500 419.500v7M833.500 419.500h34v4.500h-34zM849.500 420v4M855.500 421h11v3.500h-11z" fill="#fff" stroke="#000"/>
                    <path d="M806 419.500h28v6.500h-28z" fill="#333"/>
                    <path d="M808 421h24M808 424h24" stroke="#ccc" stroke-dasharray="2 2 1 3"/>
                    <!-- outside dimension -->
                    <path d="M892 546.500h16M892 565.500h16M907.500 544v26" stroke="#333" fill="none"/>
                    <path d="M904 553v6M904 566v4" stroke="#333" stroke-width="2" stroke-dasharray="1.500 .5"/>
                    <!-- dining hall -->
                    <use href="#seat" x="718" y="456" width="16" height="16"/><use href="#seat" x="749" y="456" width="16" height="16"/><use href="#seat" x="774" y="456" width="16" height="16"/><use href="#seat" x="806" y="456" width="16" height="16"/><use href="#seat" x="834" y="456" width="16" height="16"/><use href="#seat" x="865" y="456" width="16" height="16"/>
                    <use href="#seat" x="718" y="474" width="16" height="16"/><use href="#seat" x="749" y="474" width="16" height="16"/><use href="#seat" x="774" y="475" width="16" height="16"/><use href="#seat" x="806" y="475" width="16" height="16"/><use href="#seat" x="834" y="474" width="16" height="16"/><use href="#seat" x="865" y="474" width="16" height="16"/>
                    <use href="#seat" x="718" y="495" width="16" height="16"/><use href="#seat" x="749" y="495" width="16" height="16"/><use href="#seat" x="774" y="496" width="16" height="16"/><use href="#seat" x="806" y="496" width="16" height="16"/><use href="#seat" x="834" y="495" width="16" height="16"/><use href="#seat" x="865" y="495" width="16" height="16"/>
                    <use href="#seat" x="718" y="515" width="16" height="16"/><use href="#seat" x="749" y="515" width="16" height="16"/><use href="#seat" x="774" y="515" width="16" height="16"/><use href="#seat" x="806" y="515" width="16" height="16"/>
                    <use href="#seat" x="718" y="533" width="16" height="16"/><use href="#seat" x="749" y="533" width="16" height="16"/><use href="#seat" x="776" y="531" width="16" height="16"/><use href="#seat" x="807" y="531" width="16" height="16"/>
                    <use href="#seat" x="718" y="551" width="16" height="16"/><use href="#seat" x="749" y="551" width="16" height="16"/><use href="#seat" x="776" y="550" width="16" height="16"/><use href="#seat" x="807" y="550" width="16" height="16"/>
                    <use href="#seat" x="718" y="569" width="16" height="16"/><use href="#seat" x="749" y="569" width="16" height="16"/>
                    <use href="#seat" x="718" y="587" width="16" height="16"/><use href="#seat" x="749" y="587" width="16" height="16"/>
                    <!-- navigation bar -->
                    <g class="navbar">
                        <rect x="967.500" y="164.500" width="23" height="77" rx="4"/>
                        <circle cx="986" cy="168" r="2"/><circle cx="986" cy="236.500" r="2"/>
                        <circle cx="978" cy="184.500" r="6"/><circle cx="978" cy="184.500" r="3"/>
                        <path d="M970 202.500h17M979 191h7v-3M983 187v5"/>
                        <path d="M974 209h7v5h-7z" fill="#bcc8b4"/><circle cx="981" cy="214" r="2.500"/><path d="M983 216l3 3"/>
                        <path d="M976.500 197.500h4l-2 2zM976.500 225.500h4l-2 2z" fill="#aaa"/>
                    </g>
                </svg>
                <div class="vscroll"><i class="up"></i><div class="thumb"></div><i class="down"></i></div>
            </div>
            <div class="view-bar">
                <span class="scale">1 : 100</span>
                <div class="vb-icons">
                    <svg><use href="#i-detail"/></svg><svg><use href="#i-box"/></svg><svg><use href="#i-sunx"/></svg><svg><use href="#i-shadowx"/></svg><svg><use href="#i-cropx"/></svg><svg><use href="#i-crop"/></svg><svg><use href="#i-glasses"/></svg><svg><use href="#i-bulb"/></svg><svg><use href="#i-worksx"/></svg><svg><use href="#i-temp"/></svg><svg><use href="#i-analyt"/></svg><svg><use href="#i-constr"/></svg>
                </div>
                <div class="hscroll"><i class="left"></i><div class="thumb"></div><i class="right"></i></div>
                <i class="grip"></i>
            </div>
        </section>

        <!-- Project browser -->
        <aside class="browser">
            <div class="pal-title"><span>Диспетчер проекта - KD.161-2-AR_northfrostvale</span><svg class="x"><use href="#i-cross"/></svg></div>
            <ul class="tree">
                <li><div class="node"><i class="pm"></i><svg><use href="#i-views"/></svg>Виды (Тип)</div>
                    <ul>
                        <li><div class="node"><i class="pm"></i>Планы этажей (ПЭ_Модель)</div>
                            <ul>
                                <li><div class="node leaf"><svg><use href="#i-view"/></svg>В_АР_ПЭ_02 Этаж</div></li>
                                <li><div class="node leaf"><svg><use href="#i-view"/></svg>З_АР_ПЭ_01 Этаж</div></li>
                                <li><div class="node leaf"><svg><use href="#i-view"/></svg>В_АР_ПЭ_Генплан</div></li>
                                <li><div class="node leaf"><svg><use href="#i-view"/></svg><strong>В_АР_ПЭ_01 Этаж</strong></div></li>
                            </ul>
                        </li>
                        <li><div class="node"><i class="pm"></i>3D виды</div>
                            <ul>
                                <li><div class="node leaf"><svg><use href="#i-view"/></svg>{3D}</div></li>
                                <li><div class="node leaf"><svg><use href="#i-view"/></svg>{3D - northfrostvale}</div></li>
                            </ul>
                        </li>
                        <li><div class="node"><i class="pm"></i>3D виды (Координационный)</div>
                            <ul><li><div class="node leaf"><svg><use href="#i-view"/></svg>Navisworks</div></li></ul>
                        </li>
                        <li><div class="node"><i class="pm"></i>3D виды (Оформленный)</div>
                            <ul><li><div class="node leaf"><svg><use href="#i-view"/></svg>О_3D_Общий вид</div></li></ul>
                        </li>
                        <li><div class="node"><i class="pm"></i>Разрезы (Вспомогательный)</div>
                            <ul>
                                <li><div class="node leaf"><svg><use href="#i-view"/></svg>Разрез 2</div></li>
                                <li><div class="node leaf"><svg><use href="#i-view"/></svg>Разрез 1</div></li>
                            </ul>
                        </li>
                    </ul>
                </li>
                <li><div class="node"><i class="pm plus"></i><svg><use href="#i-legend"/></svg>Легенды</div></li>
                <li><div class="node"><i class="pm plus"></i><svg><use href="#i-sched"/></svg>Ведомости/Спецификации (Назначение вида)</div></li>
                <li><div class="node"><i class="pm"></i><svg><use href="#i-sheets"/></svg>Листы (Раздел проекта)</div>
                    <ul>
                        <li><div class="node"><i class="pm"></i>АР</div>
                            <ul><li><div class="node"><i class="pm plus"></i>1 - Общие данные</div></li></ul>
                        </li>
                        <li><div class="node"><i class="pm"></i>АС</div>
                            <ul>
                                <li><div class="node sheet">*01 - Титульный лист_01</div></li>
                                <li><div class="node sheet">*02 - Титульный лист_02</div></li>
                            </ul>
                        </li>
                        <li><div class="node"><i class="pm"></i>ИЗМ</div>
                            <ul>
                                <li><div class="node sheet">1 - Первый лист изменений</div></li>
                                <li><div class="node sheet">2 - Второй лист изменений</div></li>
                            </ul>
                        </li>
                    </ul>
                </li>
                <li><div class="node"><i class="pm plus"></i><svg><use href="#i-family"/></svg>Семейства</div></li>
                <li><div class="node"><i class="pm plus"></i><svg><use href="#i-groups"/></svg>Группы</div></li>
                <li><div class="node"><i class="pm none"></i><svg><use href="#i-link"/></svg>Связанные файлы Revit</div></li>
            </ul>
        </aside>
    </main>

    <footer class="status">
        <span class="mode">Режим ожидания</span>
        <svg class="ws"><use href="#i-ws"/></svg>
        <div class="combo workset"><span>АР_Стены (не подлежит редактир</span><i class="chev"></i></div>
        <svg class="req"><use href="#i-req"/></svg><span class="count">:0</span>
        <svg class="opt"><use href="#i-opt"/></svg>
        <svg class="optx"><use href="#i-optx"/></svg>
        <div class="combo option"><span>Главная модель</span><i class="chev"></i></div>
        <i class="check"></i><span class="only">Только редактируемые</span>
        <div class="sel-icons">
            <svg><use href="#i-sel1"/></svg><svg><use href="#i-sel2"/></svg><svg><use href="#i-sel3"/></svg><svg><use href="#i-sel4"/></svg><svg><use href="#i-sel5"/></svg>
            <svg viewBox="0 0 14 14"><circle cx="7" cy="7" r="4.500" fill="none" stroke="#999" stroke-width="2" stroke-dasharray="2.500 1"/></svg>
            <svg><use href="#i-filter"/></svg>
        </div>
        <span>:0</span>
    </footer>

    <div class="taskbar">
        <div class="apps">
            <span class="app"><svg viewBox="0 0 24 24"><circle cx="12" cy="12" r="11.500" fill="#e8eaea"/><path d="M6.500 7.500q2.500-1.500 5 0v4q-2.500-1.500-5.500 0zM12.500 8q2.500 1.200 5.500-.2l-.8 4q-2.500 1.200-5 0zM5.800 12.700q2.700-1.400 5.200 0l-.5 4q-2.500-1.400-5.300 0zM12 13.200q2.500 1.300 5.200 0l-.7 4q-2.500 1.200-5 0z" fill="#2c3537"/></svg></span>
            <span class="app"><svg viewBox="0 0 24 24"><circle cx="14.500" cy="9.500" r="7" fill="none" stroke="#fff" stroke-width="2"/><path d="M9.500 14.500l-7 7" stroke="#fff" stroke-width="2.300"/></svg></span>
            <span class="app"><svg viewBox="0 0 24 24"><path d="M5.500 6v2h9V6M5.500 10h9v5h-9zM5.500 20v-2.500h9V20M18 5v4M18 12v8M16.500 10.500h3" fill="none" stroke="#ccd2d2" stroke-width="1.200"/></svg></span>
            <span class="app"><svg viewBox="0 0 24 24"><path d="M2 2h20v19l-2 1H2z" fill="#3a49ad"/><path d="M7 2h10v7H7z" fill="#ddd"/><path d="M13 3h2.500v5H13z" fill="#2a3580"/><path d="M4.500 11h15v10h-15z" fill="#fff"/><path d="M5 13.500h14M5 16h14M5 18.500h14" stroke="#d25050" stroke-width="1.200"/></svg></span>
            <span class="app"><svg viewBox="0 0 24 24"><circle cx="12" cy="12" r="9.500" fill="#2ba2d8"/><path d="M6 12l11.500-4.500-2 10-3.500-2.500-2 2v-3.300l5-4.700-6 4z" fill="#fff"/></svg></span>
            <span class="app"><svg viewBox="0 0 24 24"><path d="M2 2h20v20H2z" fill="#090b1c"/><path d="M9 4h8l3 3v9H9zM4 9v10h11" fill="none" stroke="#3d90e8" stroke-width="1.800"/><path d="M9 12h6l-4 3 3-5z" fill="#cf2abc"/></svg></span>
            <span class="app run"><svg viewBox="0 0 24 24"><ellipse cx="12" cy="12" rx="7.200" ry="8" fill="none" stroke="#d82737" stroke-width="4"/></svg></span>
            <span class="app run"><svg viewBox="0 0 24 24"><circle cx="12" cy="12" r="11" fill="#e6f3e8"/><circle cx="12" cy="12" r="9.500" fill="#35994b"/><path d="M7 6l2.300 9c1 2 4 1.500 4-1L12 7M14 13.500c.5 2 2 2 3.500 1.500" fill="none" stroke="#fff" stroke-width="2.200"/></svg></span>
            <span class="app run"><svg viewBox="0 0 24 24"><circle cx="12" cy="12" r="9.500" fill="#1b3a60"/><circle cx="15.500" cy="9" r="3.800" fill="#1b3a60" stroke="#fff" stroke-width="1.800"/><path d="M2.700 12.500l7 3 4-3" stroke="#fff" stroke-width="2.500" fill="none"/><circle cx="9.500" cy="16" r="2.600" fill="#fff"/></svg></span>
            <span class="app run cur"><span class="rvt">R<small>RVT</small></span></span>
            <span class="app run"><svg viewBox="0 0 24 24"><circle cx="12" cy="12" r="5" fill="none" stroke="#f4f4f4" stroke-width="2.400"/><circle cx="12" cy="12" r="7" fill="none" stroke="#f4f4f4" stroke-width="2.600" stroke-dasharray="2.750 2.750"/></svg></span>
            <span class="app run"><svg viewBox="0 0 24 24"><circle cx="12" cy="12" r="10.500" fill="#eee"/><path d="M12 12L8 3.500l5-1z" fill="#e24b3b"/><path d="M12 12l3-9 4 3z" fill="#9a53b0"/><path d="M12 12l9-3v5z" fill="#3b72c8"/><path d="M12 12l7 5.500-4 2.500z" fill="#49a6cf"/><path d="M12 12l1 9-5-1z" fill="#3d9c6a"/><path d="M12 12l-7 6-2-5z" fill="#ea8a34"/><path d="M12 12L3 10l3-4.500z" fill="#c03a56"/><circle cx="12" cy="12" r="2" fill="#eee"/></svg></span>
            <span class="app run"><svg viewBox="0 0 24 24"><path d="M1 3.500h22v15H1z" fill="#222"/><path d="M2.500 5H12v6H2.500z" fill="#e91e63"/><path d="M12 5h9.500v6H12z" fill="#ffc107"/><path d="M2.500 11H12v6H2.500z" fill="#c13bd0"/><path d="M12 11h9.500v6H12z" fill="#3ec46a"/><circle cx="12" cy="11" r="4.500" fill="#fff"/><path d="M9.500 11h5" stroke="#e58" stroke-width="1.500"/><path d="M8 20.500h8M12 18v2" stroke="#222" stroke-width="1.500"/></svg></span>
        </div>
        <div class="tray">
            <svg viewBox="0 0 14 14"><path d="M2.500 9L7 4.500 11.500 9" fill="none" stroke="#fff" stroke-width="1.200"/></svg>
            <svg viewBox="0 0 14 14"><path d="M1 13C2 6 6 2 13 1c0 6-4 9-9 9.500z" fill="#a98bc8"/><path d="M1 13L11 3" stroke="#5c3f80"/></svg>
            <svg viewBox="0 0 14 14"><path d="M.5 1h13v12H.5z" fill="#eee"/><path d="M2.500 2.500h3V9h-3z" fill="#5c8f44"/><path d="M5.500 2.500h3V9h-3z" fill="#d2343a"/><path d="M8.500 2.500h3V9h-3z" fill="#eebb3c"/><path d="M2 11h10" stroke="#666"/></svg>
            <svg viewBox="0 0 14 14"><path d="M1 5h10v8H1z" fill="#ccd"/><path d="M1 5h10v3H1z" fill="#4e579a"/><path d="M7 5l5-4M9 1l4 4" stroke="#d4202e" stroke-width="2.200"/></svg>
            <svg viewBox="0 0 14 14"><rect x="4" width="6" height="10" rx="2" fill="#e5eef0"/><path d="M2.500 8c0 5 9 5 9 0M7 11.500V14" fill="none" stroke="#b5c2c4"/></svg>
            <svg viewBox="0 0 14 14"><path d="M3.500 4.500h10v6h-10z" fill="#dfe3e3" stroke="#fff"/><path d="M1 3v3h2V3M2 6v5h3" fill="none" stroke="#fff"/></svg>
            <svg viewBox="0 0 14 14"><path d="M1 5h2.500L7 2v10L3.500 9H1z" fill="none" stroke="#fff"/><path d="M9 5q1.500 2 0 4M11 3.500q2.500 3.500 0 7" fill="none" stroke="#fff"/></svg>
            <svg class="kbd" viewBox="0 0 20 12"><path d="M.5.5h19v11H.5z" fill="none" stroke="#eee"/><path d="M3 3.500h14M3 6h14" fill="none" stroke="#eee" stroke-dasharray="1.500 1"/><path d="M5 9h10" stroke="#eee"/></svg>
            <span class="lang">РУС</span>
            <span class="clock">15:35<br>25.02.2026</span>
            <svg class="note" viewBox="0 0 14 14"><path d="M.5.5h13v10H8L5 13.500v-3H.5z" fill="#f4f4f4"/><path d="M3 3.500h8M3 5.700h8M3 8h4" stroke="#334"/><circle cx="11" cy="10.500" r="2.800" fill="#29383a" stroke="#eee"/></svg>
        </div>
    </div>
</body>
</html>
```

FILE: styles.css
```css
* {
    box-sizing: border-box;
}

body {
    margin: 0;
    width: 1280px;
    height: 720px;
    overflow: hidden;
    display: flex;
    flex-direction: column;
    background-color: #f0f0f0;
    color: #444;
    font-family: "Noto Sans", "Open Sans", sans-serif;
    font-size: 10px;
    line-height: 14px;
    letter-spacing: -0.2px;
    white-space: nowrap;
}

svg {
    width: 14px;
    height: 14px;
    flex: none;
    display: block;
}

.defs {
    width: 0;
    height: 0;
    position: absolute;
}

.s {
    fill: #eceeee;
    stroke: #5c5c5c;
}

.dd {
    width: 0;
    height: 0;
    flex: none;
    border: 2px solid transparent;
    border-top: 2.5px solid #333;
    border-bottom: none;
}

.dd.lg {
    border-width: 3px;
    border-top-width: 3.500px;
    border-bottom: none;
}

.dd.bar {
    width: 7px;
    height: 7px;
    border: none;
    background: linear-gradient(#444, #444) 0 0 / 7px 1px no-repeat, conic-gradient(from -45deg at 50% 100%, #444 90deg, transparent 0) 0 3px / 7px 3.500px no-repeat;
    transform: none;
}

/* Title bar */
.titlebar {
    height: 25px;
    flex: none;
    display: flex;
    background-color: #c9cbcb;
}

.qat {
    width: 533px;
    height: 21px;
    display: grid;
    grid-template-columns: 22px 19px 25px 17px 22px 8px 21px 8px 23px 8px 21px 19px 34px 18px 12px 19px 20px 20px 28px 8px 19px 22px 28px 16px 10px 14px;
    align-items: center;
    justify-items: center;
}

.rlogo {
    width: 16px;
    height: 17px;
    background-color: #1a5fc2;
    border-bottom: 3px solid #0b3f95;
    color: #fff;
    font-weight: bold;
    font-size: 10px;
    line-height: 13px;
    text-align: center;
}

.dim {
    opacity: .3;
}

.flip {
    transform: scaleX(-1);
}

.letter-a {
    font-size: 15px;
    color: #444;
}

.qat-on {
    width: 19px;
    height: 19px;
    border: 1px solid #5b9bc4;
    background-color: #c4dcec;
    padding: 2px 1px;
}

.caption {
    width: 426px;
    padding-top: 1px;
}

.account {
    display: grid;
    grid-template-columns: 10px 25px 17px 71px 8px 28px 30px 8px;
    width: 258px;
    height: 22px;
    align-items: center;
    justify-items: center;
    color: #333;
}

.back {
    border: 2.500px solid transparent;
    border-right-color: #333;
    border-left: none;
}

.username {
    justify-self: start;
    padding-left: 2px;
    letter-spacing: -0.35px;
}

.help {
    width: 14px;
    height: 14px;
    border-radius: 50%;
    border: 1px solid #445;
    background-color: #f3f5fa;
    color: #24479e;
    font-weight: bold;
    font-size: 10px;
    line-height: 12px;
    text-align: center;
}

.winbtns {
    display: flex;
    gap: 11px;
    padding: 6px 0 0 5px;
}

.winbtns svg {
    width: 10px;
    height: 10px;
}

/* Ribbon tabs */
.tabs {
    height: 16px;
    flex: none;
    display: grid;
    grid-template-columns: 40px 73px 76px 42px 107px 58px 57px 68px 50px 108px 33px 73px 72px 69px 58px 54px 77px 9px 28px 8px;
    align-items: center;
    padding-left: 1px;
    background-color: #c9cbcb;
}

.tab {
    height: 16px;
    line-height: 16px;
    padding-left: 8px;
}

.file {
    width: 38px;
    padding-left: 7px;
    background-color: #2b7da8;
    color: #fff;
}

.tab.active {
    background-color: #f0f0f0;
}

.more {
    width: 8px;
    height: 6px;
}

.minim {
    width: 14px;
    height: 8px;
    justify-self: center;
}

/* Ribbon */
.ribbon {
    height: 81px;
    flex: none;
    display: flex;
    padding-top: 3px;
    border-bottom: 1px solid #dcdcdc;
    background-color: #f0f0f0;
}

.panel {
    flex: none;
    display: flex;
    flex-direction: column;
}

.body {
    height: 61px;
    display: grid;
}

.label {
    display: flex;
    justify-content: center;
    align-items: center;
    gap: 5px;
    height: 17px;
}

.p-select { width: 55px; }
.p-build { width: 418px; }
.p-circ { width: 97px; }
.p-model { width: 111px; }
.p-room { width: 236px; border-left: 1px solid #e4e4e4; }
.p-open { width: 172px; }
.p-datum { width: 62px; position: relative; }
.p-wp { width: 106px; }

.p-build .body { grid-template-columns: 50px 28px 6px 89px 116px 128px; }
.p-build .col:nth-child(3) { grid-column: 4; }
.p-circ .body { padding-left: 5px; }
.p-model .body { padding-left: 5px; }
.p-room .body { grid-template-columns: 141px 90px; padding-left: 4px; }
.p-room .cmd { gap: 3.500px; }
.p-open .body { grid-template-columns: 42px 22px 10px 92px; padding-left: 1px; }
.p-open .col { grid-column: 4; }
.p-wp .body { grid-template-columns: 62px 30px; padding-left: 8px; }
.p-wp .big { margin-right: -6px; }

.cmd {
    height: 20.500px;
    display: flex;
    align-items: center;
    gap: 4px;
}

.cmd .dd {
    margin-left: 4px;
}

.cmd .near {
    margin-left: 1px;
}

.cmd.off {
    color: #b4b4b4;
}

.two {
    padding-top: 10px;
}

.big {
    display: flex;
    flex-direction: column;
    align-items: center;
    text-align: center;
}

.big svg {
    width: 26px;
    height: 26px;
    margin-top: 2px;
}

.big span {
    margin-top: 3px;
    line-height: 13px;
}

.big .dd {
    margin-top: 3px;
}

.pressed {
    width: 51px;
    height: 60px;
    margin-left: 2px;
    border: 1px solid #4a94c8;
    background-color: #acd2ee;
}

.pressed svg {
    width: 14px;
    height: 20px;
    margin-top: 5px;
}

.pressed span {
    margin-top: 6px;
}

.pointer {
    position: absolute;
    left: 23px;
    top: 20px;
    width: 40px;
    height: 40px;
    padding: 15px 0 0 19px;
    background: radial-gradient(circle, rgba(240, 240, 50, .65) 0, rgba(240, 240, 60, .55) 45%, rgba(240, 240, 80, 0) 70%);
}

.pointer svg {
    width: 10px;
    height: 14px;
}

.options-bar {
    height: 23px;
    flex: none;
    background-color: #ececec;
}

/* Palettes */
.workspace {
    height: 520px;
    flex: none;
    display: flex;
}

.pal-title {
    height: 17px;
    display: flex;
    justify-content: space-between;
    align-items: center;
    padding: 0 3px 1px 3px;
    border-top: 1px solid #d0d0d0;
    border-bottom: 1px solid #d8d8d8;
}

.x {
    width: 9px;
    height: 9px;
}

.props {
    width: 370px;
    display: flex;
    flex-direction: column;
}

.type {
    height: 58px;
    display: flex;
    align-items: center;
    padding: 1px 3px 0 3px;
}

.type-pic {
    width: 55px;
    height: 55px;
    padding: 13px;
    border: 1px solid #dedede;
}

.type-pic svg {
    width: 28px;
    height: 28px;
}

.type-name {
    flex: 1;
    padding-left: 4px;
    line-height: 13px;
}

.instance {
    height: 20px;
    display: flex;
    gap: 4px;
}

.combo {
    display: flex;
    align-items: center;
    justify-content: space-between;
    padding: 0 5px 0 3px;
    color: #222;
}

.instance .combo {
    width: 279px;
    height: 18px;
    margin: 1px 0 0 2px;
    padding-left: 1px;
    border: 1px solid #c8c8c8;
    background-color: #e1e1e1;
    letter-spacing: -0.3px;
}

.chev,
.up,
.down,
.left,
.right {
    width: 5px;
    height: 5px;
    flex: none;
    border: solid #555;
    border-width: 0 1px 1px 0;
    transform: translateY(-1px) rotate(45deg);
}

.edit-type {
    display: flex;
    align-items: center;
    gap: 2px;
    height: 18px;
    letter-spacing: 0;
}

.edit-type svg {
    width: 12px;
    height: 12px;
}

.grid-wrap {
    height: 403px;
    display: flex;
}

.pgrid {
    width: 355px;
    padding-left: 1px;
    overflow: hidden;
}

.cat {
    height: 16px;
    display: flex;
    align-items: center;
    justify-content: space-between;
    padding: 0 3px 0 2px;
    background-color: #dcdcdc;
    color: #222;
}

.cat i {
    width: 5px;
    height: 6px;
    margin-bottom: 4px;
    background: conic-gradient(from 135deg at 50% 0, #222 90deg, transparent 0) 0 0 / 5px 3px;
}

.row {
    height: 16px;
    display: grid;
    grid-template-columns: 172px 172px 10px;
    border-bottom: 1px solid #cfcfcf;
    background: linear-gradient(#c8c8c8, #c8c8c8) 343px 0 / 1px 100% no-repeat #fff;
    color: #222;
    line-height: 15px;
}

.row span {
    padding-left: 7px;
    border-right: 1px solid #c8c8c8;
}

.row b {
    font-weight: normal;
    padding-left: 2.500px;
}

.row.ro {
    color: #808080;
}

.row .edit {
    border: 1px solid #222;
    margin-left: 1px;
    padding-left: 3px;
    line-height: 13px;
}

.row .btn {
    margin: 0 0 0 2px;
    padding: 0;
    border: 1px solid #b5b5b5;
    border-left-color: #ddd;
    background-color: #e1e1e1;
    text-align: center;
    line-height: 14px;
}

.row.mini::after {
    content: "";
    border: 1px solid #bbb;
    background-color: #e4e4e4;
}

.check {
    display: block;
    flex: none;
    width: 11px;
    height: 11px;
    margin-top: 2px;
    border: 1px solid #444;
    background-color: #fff;
}

.vscroll {
    width: 13px;
    display: flex;
    flex-direction: column;
    align-items: center;
    background-color: #f0f0f0;
}

.props .vscroll {
    margin-left: 1px;
}

.vscroll .up {
    transform: rotate(225deg);
    margin-top: 6px;
}

.vscroll .down {
    margin-top: auto;
    margin-bottom: 5px;
}

.vscroll .thumb {
    width: 12px;
    background-color: #cdcdcd;
}

.props .thumb {
    height: 187px;
    margin-top: 4px;
}

.props-foot {
    height: 22px;
    display: flex;
    justify-content: space-between;
    align-items: flex-start;
    padding: 2px;
}

.props-foot a {
    color: #3c7cb4;
    text-decoration: underline;
}

.apply {
    width: 57px;
    height: 17px;
    line-height: 17px;
    text-align: center;
    background-color: #cccccc;
    color: #8a8a8a;
}

/* Drawing area */
.view {
    width: 638px;
    border-left: 2px solid #d0d0d0;
    display: flex;
    flex-direction: column;
}

.view-tabs {
    height: 18px;
    display: grid;
    grid-template-columns: 127px 131px 106px 125px 124px 23px;
    padding-top: 1px;
    background-color: #ffb2ba;
}

.vt {
    display: flex;
    align-items: center;
    padding-bottom: 2px;
    color: #333;
    letter-spacing: -0.3px;
}

.vt svg {
    width: 13px;
    height: 13px;
    margin: 0 7px 0 5px;
    opacity: .55;
}

.vt.on {
    color: #000;
    font-weight: bold;
    letter-spacing: -0.15px;
}

.vt.on svg {
    opacity: 1;
    margin-right: 6px;
}

.vt.on .x {
    width: 9px;
    height: 9px;
    margin-left: 6px;
}

.vt-list {
    display: flex;
    align-items: center;
    justify-content: center;
    margin-top: -1px;
    padding: 0 0 1px 4px;
    background-color: #e4e4e4;
}

.canvas-wrap {
    height: 487px;
    display: flex;
    background-color: #fff;
}

.canvas {
    width: 620px;
    height: 487px;
}

.axis {
    fill: none;
    stroke: #444;
    stroke-width: 1;
    stroke-dasharray: 24 3 1.500 3;
}

.bubble {
    fill: #fff;
    stroke: #444;
}

.wall {
    fill: none;
    stroke: #555;
    stroke-width: 1.800;
}

.post {
    stroke: #111;
    stroke-width: 4;
}

.navbar {
    fill: #f4f6f5;
    stroke: #a8aeac;
}

.view .vscroll {
    background-color: #f2f2f2;
}

.view .vscroll .thumb {
    height: 13px;
    margin-top: 226px;
}

.view-bar {
    height: 14px;
    display: flex;
    align-items: center;
    background-color: #f0f0f0;
}

.scale {
    width: 63px;
    padding-left: 20px;
    color: #222;
    font-size: 9px;
    letter-spacing: 0;
}

.vb-icons {
    display: flex;
    gap: 3.600px;
    width: 199px;
}

.vb-icons svg {
    width: 13px;
    height: 13px;
}

.hscroll {
    width: 354px;
    display: flex;
    align-items: center;
    padding: 0 4px;
}

.hscroll .left {
    transform: rotate(135deg);
}

.hscroll .right {
    transform: rotate(-45deg);
    margin-left: auto;
}

.hscroll .thumb {
    width: 14px;
    height: 12px;
    margin-left: 162px;
    background-color: #cdcdcd;
}

.grip {
    width: 7px;
    height: 7px;
    margin-left: 6px;
    background: conic-gradient(from 90deg at 1px 1px, transparent 90deg, #bbb 0) 0 0 / 3px 3px;
    clip-path: polygon(100% 0, 100% 100%, 0 100%);
}

/* Project browser */
.browser {
    width: 272px;
    border-left: 2px solid #d0d0d0;
    background-color: #fff;
}

.browser .pal-title {
    padding-left: 1px;
    background-color: #f0f0f0;
}

.tree,
.tree ul {
    margin: 0;
    padding: 0;
    list-style: none;
}

.tree {
    padding-left: 3px;
    color: #333;
}

.tree ul {
    padding-left: 17.500px;
}

.tree li {
    background: repeating-linear-gradient(#c4c4c4 0 1px, #fff 1px 2px) 4px 0 / 1px 100% no-repeat;
}

.tree li:last-child {
    background-size: 1px 8px;
}

.node {
    height: 14.670px;
    display: flex;
    align-items: center;
    background: linear-gradient(#cccccc, #cccccc) 5px 7px / 11px 1px no-repeat;
}

.node svg {
    width: 13px;
    height: 13px;
    margin-right: 3.500px;
}

.pm {
    width: 9px;
    height: 9px;
    flex: none;
    margin-right: 6px;
    border: 1px solid #999;
    background: linear-gradient(#555, #555) 50% 50% / 5px 1px no-repeat #fff;
}

.tree ul .pm {
    margin-right: 9px;
}

.pm.plus {
    background: linear-gradient(#555, #555) 50% 50% / 5px 1px no-repeat, linear-gradient(#555, #555) 50% 50% / 1px 5px no-repeat #fff;
}

.pm.none {
    border: none;
    background: none;
}

.leaf {
    padding-left: 15px;
}

.sheet {
    padding-left: 18px;
}

.tree strong {
    padding: 0 2px 0 0;
    color: #000;
    background-color: #dedede;
}

/* Status bar */
.status {
    height: 27px;
    flex: none;
    display: flex;
    align-items: center;
    padding: 0 0 3px 2px;
    background-color: #cdcdcd;
    color: #222;
}

.mode {
    width: 366px;
}

.ws {
    width: 15px;
    height: 15px;
}

.workset {
    width: 168px;
    height: 15px;
    margin-left: 5px;
    padding-left: 1px;
    background-color: #fff;
    letter-spacing: -0.35px;
}

.req {
    margin-left: 6px;
}

.count {
    width: 24px;
    margin-left: 2px;
}

.opt {
    margin-left: 0;
}

.optx {
    margin-left: 6px;
}

.option {
    width: 170px;
    height: 15px;
    margin-left: 5px;
    padding-left: 2px;
    background-color: #fff;
    color: #8d8d8d;
}

.status .check {
    width: 12px;
    height: 12px;
    margin: 0 3px 0 146px;
}

.only {
    width: 116px;
    letter-spacing: -0.28px;
}

.sel-icons {
    display: flex;
    gap: 6px;
}

/* Taskbar */
.taskbar {
    height: 28px;
    flex: none;
    display: flex;
    justify-content: space-between;
    background: linear-gradient(90deg, #2a3a3c, #1f302f 50%, #17282b);
    color: #fff;
}

.apps {
    display: grid;
    grid-template-columns: 36px 39px 41px 43px 41px 42px repeat(7, 41.400px);
}

.app {
    display: flex;
    justify-content: center;
    padding-bottom: 5px;
    align-items: center;
}

.app svg {
    width: 22px;
    height: 22px;
}

.run {
    margin: 0 1px;
    border: 1px solid #5e6c6c;
    background-color: #445253;
}

.cur {
    background-color: #758384;
}

.rvt {
    width: 17px;
    height: 20px;
    background-color: #2d75e0;
    font-size: 11px;
    font-weight: bold;
    line-height: 13px;
    text-align: center;
    display: flex;
    flex-direction: column;
}

.rvt small {
    height: 7px;
    background-color: #0f459f;
    font-size: 4px;
    line-height: 6px;
}

.tray {
    display: grid;
    grid-template-columns: 20px 20px 20px 19px 21px 20px 19px 28px 28px 60px 32px;
    width: 303px;
    height: 26px;
    align-items: center;
    justify-items: center;
    padding-bottom: 4px;
}

.tray .kbd {
    width: 20px;
    height: 12px;
}

.clock {
    text-align: center;
    line-height: 15px;
    margin-bottom: 3px;
}
```
